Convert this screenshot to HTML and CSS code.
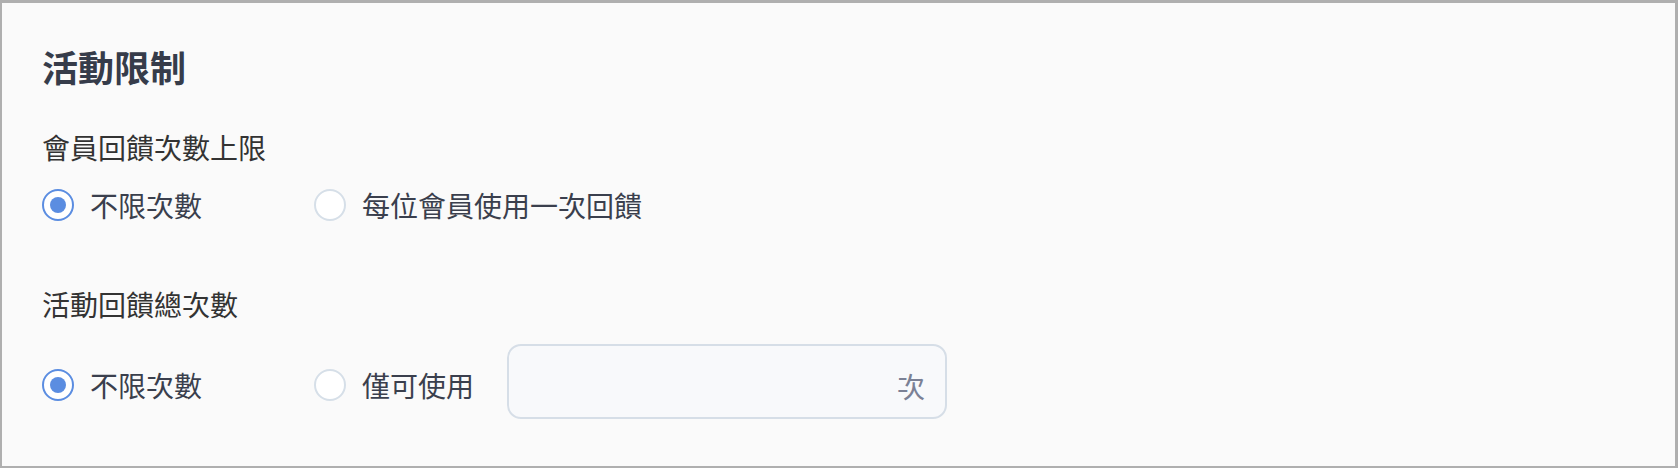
FILE: index.html
```html
<!DOCTYPE html>
<html lang="zh-Hant">
<head>
    <meta charset="UTF-8">
    <meta name="viewport" content="width=device-width, initial-scale=1.0">
    <title>活動限制</title>
    <link rel="stylesheet" href="styles.css">
</head>
<body>
    <div class="panel">
        <h2 class="title">活動限制</h2>

        <div class="field-label">會員回饋次數上限</div>
        <div class="radio-row">
            <label class="option">
                <span class="radio checked"></span>
                <span class="option-text">不限次數</span>
            </label>
            <label class="option">
                <span class="radio"></span>
                <span class="option-text">每位會員使用一次回饋</span>
            </label>
        </div>

        <div class="field-label second">活動回饋總次數</div>
        <div class="radio-row with-input">
            <label class="option">
                <span class="radio checked"></span>
                <span class="option-text">不限次數</span>
            </label>
            <label class="option">
                <span class="radio"></span>
                <span class="option-text">僅可使用</span>
            </label>
            <div class="count-input">
                <input type="text">
                <span class="unit">次</span>
            </div>
        </div>
    </div>
</body>
</html>
```

FILE: styles.css
```css
html, body {
    margin: 0;
    height: 100%;
}
body {
    font-family: "Noto Sans CJK TC", "Noto Sans", sans-serif;
    color: #333;
}
.panel {
    box-sizing: border-box;
    height: 100%;
    background: #fafafa;
    border-style: solid;
    border-color: #afafaf;
    border-width: 3px 3px 2px 2px;
    padding: 38px 40px 0;
}
.title {
    margin: 0;
    font-size: 36px;
    font-weight: 700;
    line-height: 50px;
    color: #363c4a;
}
.field-label {
    margin-top: 36px;
    font-size: 28px;
    line-height: 40px;
    color: #333;
}
.field-label.second {
    margin-top: 59px;
}
.radio-row {
    display: flex;
    align-items: center;
    gap: 112px;
    margin-top: 18px;
}
.radio-row.with-input {
    margin-top: 20px;
}
.option {
    display: flex;
    align-items: center;
    gap: 16px;
    cursor: pointer;
}
.option-text {
    font-size: 28px;
    line-height: 40px;
    color: #3a3f4d;
}
.radio {
    box-sizing: border-box;
    width: 32px;
    height: 32px;
    border-radius: 50%;
    border: 2px solid #d6dfe8;
    background: #fff;
    display: flex;
    align-items: center;
    justify-content: center;
}
.radio.checked {
    border-color: #5b8de1;
}
.radio.checked::after {
    content: "";
    width: 16px;
    height: 16px;
    border-radius: 50%;
    background: #5b8de1;
}
.count-input {
    box-sizing: border-box;
    display: flex;
    align-items: center;
    width: 440px;
    height: 75px;
    margin-left: -79px;
    margin-bottom: 7px;
    padding: 8px 20px 0 16px;
    border: 2px solid #d6dee7;
    border-radius: 14px;
    background: #f8f9fb;
}
.count-input input {
    flex: 1;
    min-width: 0;
    border: none;
    outline: none;
    background: transparent;
    font-family: inherit;
    font-size: 28px;
    color: #3a3f4d;
}
.unit {
    font-size: 28px;
    color: #7b8195;
}
```
